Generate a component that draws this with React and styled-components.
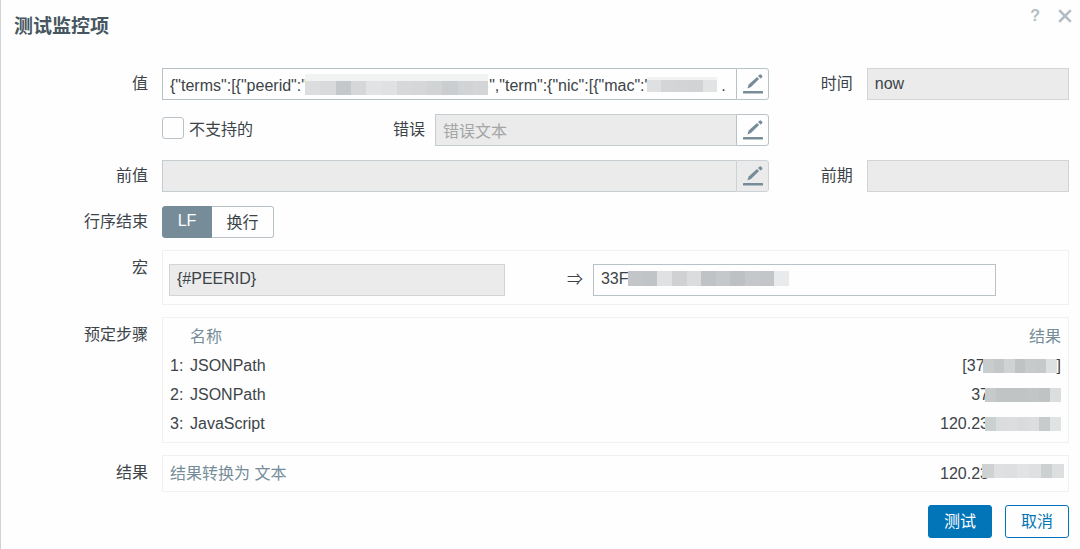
import React, { useState } from 'react';
import styled, { createGlobalStyle } from 'styled-components';

const gap = (n) => '\u00a0'.repeat(n);

const termsValue = '{"terms":[{"peerid":"' + gap(41) + '","term":{"nic":[{"mac":"' + gap(16) + '.';

const steps = [
  { name: 'JSONPath', result: '[37', end: ']', mask: ['#c9cccd', '#c3c7c8', '#d0d2d3', '#bfc3c4', '#c8cbcc', '#c5c9ca', '#dddfe0'], width: 74, overlap: 2 },
  { name: 'JSONPath', result: '37', mask: ['#c6caca', '#c1c4c5', '#c1c4c5', '#c0c4c5', '#c3c6c6', '#c0c3c3', '#dcdddf'], width: 76, overlap: 4 },
  { name: 'JavaScript', result: '120.23', mask: ['#cbd0d1', '#dadcdd', '#dcdddf', '#d9dbdc', '#dbddde', '#c8cbcc', '#e1e2e3'], width: 76, overlap: 4 },
];

const Mask = ({ colors, width, height = 14, haze = 0, className }) => {
  const cell = width / colors.length;
  return (
    <svg className={className} width={width} height={height + haze} shapeRendering="crispEdges" aria-hidden="true">
      {haze > 0 && <rect width={width} height={haze} fill="#f1f2f2" />}
      {colors.map((color, i) => (
        <rect key={i} x={i * cell} y={haze} width={cell + 1} height={height} fill={color} />
      ))}
    </svg>
  );
};

const PencilIcon = () => (
  <svg width="20" height="20" viewBox="0 0 20 20" fill="#768d99" aria-hidden="true">
    <path d="M4.4 14.6l1.3-4 8.3-7.7 2.1 2.2-8.1 8z" />
    <path d="M15 2.1l1.4-1.3a1.3 1.3 0 0 1 1.8 0l.8.8a1.3 1.3 0 0 1 0 1.8l-1.5 1.2z" />
    <rect y="17" width="20" height="2.6" rx="0.6" />
  </svg>
);

const ValueField = ({ label, disabled, locked, low, children, ...props }) => (
  <Group>
    <GroupInput disabled={disabled} $low={low} {...props} />
    {children}
    <EditButton type="button" aria-label={label} disabled={locked}>
      <PencilIcon />
    </EditButton>
  </Group>
);

const App = () => {
  const [eol, setEol] = useState('LF');
  const [unsupported, setUnsupported] = useState(false);

  return (
    <Dialog>
      <GlobalStyle />
      <Header>
        <h1>测试监控项</h1>
        <HeaderActions>
          <HelpLink href="#help" aria-label="Help">?</HelpLink>
          <CloseButton type="button" aria-label="Close">
            <svg width="14" height="14" viewBox="0 0 14 14" stroke="#b3bdc3" strokeWidth="2.6">
              <path d="M1.2 1.2l11.6 11.6M12.8 1.2l-11.6 11.6" />
            </svg>
          </CloseButton>
        </HeaderActions>
      </Header>

      <Form>
        <Label htmlFor="value">值</Label>
        <ValueField id="value" label="编辑值" defaultValue={termsValue} low>
          <FieldMask $left={143} $bottom={5} colors={['#dcdddf', '#d8dadb', '#c5c8ca', '#d5d7d8', '#e2e3e4', '#e0e1e2', '#d6d8d9', '#d5d7d8', '#d1d3d5', '#cbced0', '#d1d3d4', '#d3d5d6']} width={183} haze={7} />
          <FieldMask $left={485} $bottom={8} colors={['#dfe0e1', '#d3d5d7', '#d2d4d5', '#d1d3d4', '#e2e3e4']} width={70} height={12} haze={3} />
        </ValueField>
        <Label htmlFor="time">时间</Label>
        <TextInput id="time" disabled defaultValue="now" />

        <Label as="span" />
        <ErrorRow>
          <CheckLabel>
            <Checkbox type="checkbox" checked={unsupported} onChange={(e) => setUnsupported(e.target.checked)} />
            不支持的
          </CheckLabel>
          <Label htmlFor="error">错误</Label>
          <ErrorField>
            <ValueField id="error" label="编辑错误" disabled placeholder="错误文本" low />
          </ErrorField>
        </ErrorRow>

        <Label htmlFor="prev-value" $start>前值</Label>
        <ValueField id="prev-value" label="编辑前值" disabled locked />
        <Label htmlFor="prev-time">前期</Label>
        <TextInput id="prev-time" disabled />

        <Label as="span">行序结束</Label>
        <Segmented>
          <Segment type="button" $active={eol === 'LF'} onClick={() => setEol('LF')}>LF</Segment>
          <Segment type="button" $active={eol === 'CRLF'} onClick={() => setEol('CRLF')}>换行</Segment>
        </Segmented>
      </Form>

      <Sections>
        <SectionLabel>宏</SectionLabel>
        <MacroBox>
          <MacroInput disabled defaultValue="{#PEERID}" aria-label="宏" />
          <Arrow>⇒</Arrow>
          <Group>
            <MacroInput defaultValue="33F" aria-label="宏值" />
            <FieldMask $left={35} $bottom={10} colors={['#c3c6c9', '#c0c4c7', '#e0e1e3', '#cfd1d3', '#dadcdd', '#bfc3c6', '#c5c8ca', '#bdc1c4', '#c5c7ca', '#c3c6c8', '#e9eaeb']} width={161} height={15} />
          </Group>
        </MacroBox>

        <SectionLabel>预定步骤</SectionLabel>
        <StepsBox>
          <StepsTable>
            <thead>
              <tr>
                <th />
                <th>名称</th>
                <th>结果</th>
              </tr>
            </thead>
            <tbody>
              {steps.map((step, i) => (
                <tr key={i}>
                  <td>{i + 1}:</td>
                  <td>{step.name}</td>
                  <td>
                    <Result>
                      {step.result}
                      <ResultMask colors={step.mask} width={step.width} $overlap={step.overlap} />
                      {step.end}
                    </Result>
                  </td>
                </tr>
              ))}
            </tbody>
          </StepsTable>
        </StepsBox>

        <SectionLabel>结果</SectionLabel>
        <ResultBox>
          <Muted>结果转换为 文本</Muted>
          <Result>
            120.23
            <FinalMask colors={['#cfd2d3', '#dfe0e1', '#dddfe0', '#e2e3e4', '#dfe0e1', '#cdd0d1', '#dcdee0']} width={82} $overlap={7} />
          </Result>
        </ResultBox>
      </Sections>

      <Footer>
        <Button type="button" $primary>测试</Button>
        <Button type="button">取消</Button>
      </Footer>
    </Dialog>
  );
};

const GlobalStyle = createGlobalStyle`
* {
  box-sizing: border-box;
}
body {
  margin: 0;
  background: #fefefe;
  color: #3c4449;
}
body, input, button {
  font-family: "Liberation Sans", "Noto Sans CJK SC", sans-serif;
  font-size: 16px;
}`;

const Dialog = styled.main`
border-left: 1px solid #d0d3d5;
padding-bottom: 11px;`;

const Header = styled.header`
display: flex;
justify-content: space-between;
align-items: flex-start;
padding: 0 8px 0 13px;
h1{
    margin: 13px 0 27px;
    font-size: 19px;
    line-height: 28px;
    color: #465761;
}`;

const HeaderActions = styled.div`
display: flex;
align-items: center;
gap: 18px;
height: 32px;`;

const HelpLink = styled.a`
color: #b3bdc3;
font-size: 16px;
font-weight: bold;
text-decoration: none;`;

const CloseButton = styled.button`
display: flex;
padding: 0;
border: 0;
background: none;`;

const Form = styled.div`
display: grid;
grid-template-columns: 147px minmax(0, 3fr) 70px minmax(0, 1fr);
gap: 14px;
padding-right: 11px;`;

const Label = styled.label`
grid-column: ${(props) => (props.$start ? '1' : 'auto')};
line-height: 32px;
text-align: right;
white-space: nowrap;`;

const TextInput = styled.input`
width: 100%;
min-width: 0;
height: 32px;
padding: 0 7px;
border: 1px solid #b9c2c7;
border-radius: 0;
background: #fefefe;
color: #3c4449;
&:disabled{
    background: #ebebeb;
    border-color: #d2d5d6;
}
&::placeholder{
    color: #a3a5a6;
    opacity: 1;
}`;

const MacroInput = styled(TextInput)`
padding-bottom: 2px;`;

const Group = styled.div`
position: relative;
display: flex;
min-width: 0;
width: 100%;`;

const GroupInput = styled(TextInput)`
flex: 1;
padding-top: ${(props) => (props.$low ? '3px' : '0')};
border-right: 0;
&:disabled{
    border-color: #c6cdd1;
}`;

const EditButton = styled.button`
display: flex;
align-items: center;
justify-content: center;
flex: none;
width: 33px;
height: 32px;
padding: 0 0 0 1px;
border: 1px solid #b9c2c7;
border-radius: 0 3px 3px 0;
background: #fefefe;
&:disabled{
    border-color: #ccd2d5;
    background: #ebebeb;
}`;

const FieldMask = styled(Mask)`
position: absolute;
left: ${(props) => props.$left}px;
bottom: ${(props) => props.$bottom}px;`;

const ErrorRow = styled.div`
display: flex;
align-items: center;`;

const CheckLabel = styled.label`
display: flex;
align-items: center;
flex: 1;
gap: 5px;
line-height: 32px;`;

const Checkbox = styled.input`
appearance: none;
width: 22px;
height: 22px;
margin: 0 0 4px;
border: 1px solid #b9c2c7;
border-radius: 3px;
background: #fefefe;
&:checked{
    background: #768d99;
}`;

const ErrorField = styled.div`
width: 55%;
margin-left: 10px;`;

const Segmented = styled.div`
display: flex;`;

const Segment = styled.button`
height: 32px;
padding: 0 14px 2px;
border: 1px solid ${(props) => (props.$active ? '#768d99' : '#b9c2c7')};
background: ${(props) => (props.$active ? '#768d99' : '#fefefe')};
color: ${(props) => (props.$active ? '#fefefe' : '#3c4449')};
&:first-child{
    min-width: 50px;
    border-radius: 3px 0 0 3px;
}
&:last-child{
    min-width: 62px;
    border-radius: 0 3px 3px 0;
    border-left: 0;
}`;

const Sections = styled.div`
display: grid;
grid-template-columns: 147px minmax(0, 1fr);
gap: 12px 14px;
margin-top: 12px;
padding-right: 11px;`;

const SectionLabel = styled.span`
line-height: 36px;
text-align: right;`;

const Box = styled.div`
border: 1px solid #f0f1f1;`;

const MacroBox = styled(Box)`
display: grid;
grid-template-columns: minmax(0, 5fr) 88px minmax(0, 6fr);
align-items: center;
padding: 13px 72px 8px 6px;`;

const Arrow = styled.span`
padding: 0 10px 4px 0;
text-align: right;`;

const StepsBox = styled(Box)`
padding: 4px 7px;`;

const StepsTable = styled.table`
width: 100%;
border-collapse: collapse;
th, td{
    height: 29px;
    padding: 0;
    text-align: left;
    line-height: 20px;
}
th{
    color: #768d99;
    font-weight: normal;
}
th:first-child, td:first-child{
    width: 20px;
}
th:last-child{
    text-align: right;
}`;

const Result = styled.div`
display: flex;
align-items: center;
justify-content: flex-end;`;

const ResultMask = styled(Mask)`
margin-left: -${(props) => props.$overlap}px;`;

const FinalMask = styled(ResultMask)`
margin-right: -3px;
margin-bottom: 6px;`;

const ResultBox = styled(Box)`
display: flex;
align-items: center;
justify-content: space-between;
padding: 0 7px;
line-height: 35px;`;

const Muted = styled.span`
color: #768d99;`;

const Footer = styled.footer`
display: flex;
justify-content: flex-end;
gap: 13px;
margin-top: 13px;
padding-right: 11px;`;

const Button = styled.button`
width: 64px;
height: 33px;
padding: 0 0 4px;
border: 1px solid #0275b8;
border-radius: 3px;
background: ${(props) => (props.$primary ? '#0275b8' : '#fefefe')};
color: ${(props) => (props.$primary ? '#fefefe' : '#0275b8')};`;

export default App;
